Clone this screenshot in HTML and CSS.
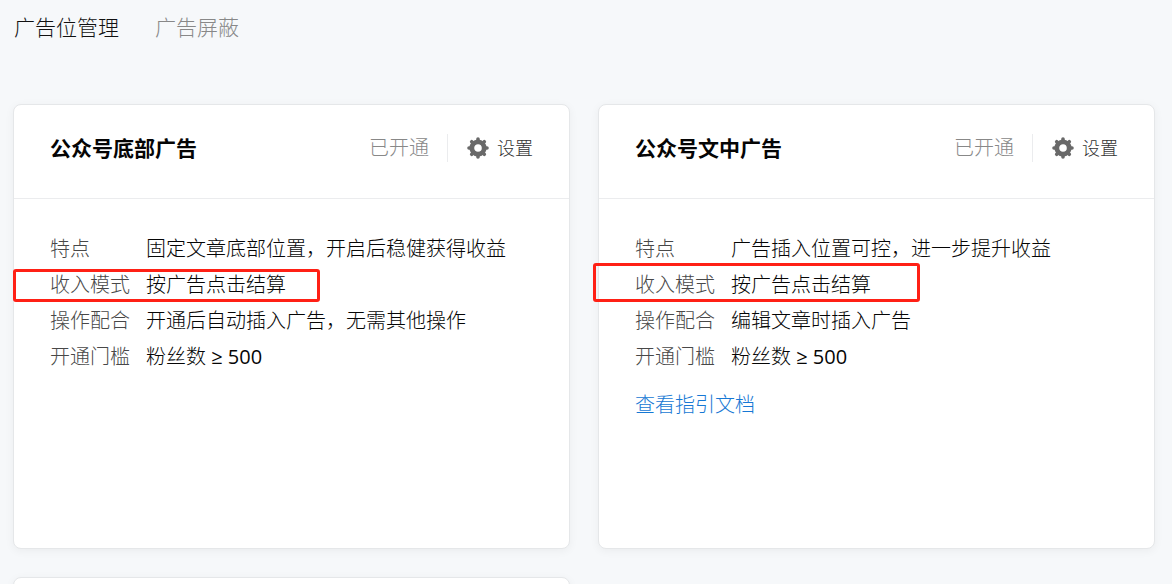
FILE: index.html
```html
<!DOCTYPE html>
<html lang="zh-CN">
<head>
<meta charset="utf-8">
<title>广告位管理</title>
<link rel="stylesheet" href="styles.css">
</head>
<body>
<nav class="tabs">
  <a class="tab tab-active" href="#slots">广告位管理</a>
  <a class="tab" href="#block">广告屏蔽</a>
</nav>
<main class="grid" id="slots">
  <section class="card">
    <header class="card-head">
      <h2 class="card-title">公众号底部广告</h2>
      <span class="status">已开通</span>
      <button class="settings" type="button">
        <svg class="gear" viewBox="0 0 22 22" aria-hidden="true"><circle cx="11" cy="11" r="6.200" fill="none" stroke="currentColor" stroke-width="4.800"/><path d="M11 2v2M11 18v2M2 11h2M18 11h2M4.700 4.700l1.200 1.200M16.100 16.100l1.200 1.200M4.700 17.300l1.200-1.200M16.100 5.900l1.200-1.200" stroke="currentColor" stroke-width="3.600" stroke-linecap="round"/></svg>
        <span>设置</span>
      </button>
    </header>
    <div class="card-body">
      <dl class="facts">
        <div class="fact"><dt>特点</dt><dd>固定文章底部位置，开启后稳健获得收益</dd></div>
        <div class="fact fact-marked mark-bottom"><dt>收入模式</dt><dd>按广告点击结算</dd></div>
        <div class="fact"><dt>操作配合</dt><dd>开通后自动插入广告，无需其他操作</dd></div>
        <div class="fact"><dt>开通门槛</dt><dd>粉丝数 <span class="amount">≥ 500</span></dd></div>
      </dl>
    </div>
  </section>
  <section class="card">
    <header class="card-head">
      <h2 class="card-title">公众号文中广告</h2>
      <span class="status">已开通</span>
      <button class="settings" type="button">
        <svg class="gear" viewBox="0 0 22 22" aria-hidden="true"><circle cx="11" cy="11" r="6.200" fill="none" stroke="currentColor" stroke-width="4.800"/><path d="M11 2v2M11 18v2M2 11h2M18 11h2M4.700 4.700l1.200 1.200M16.100 16.100l1.200 1.200M4.700 17.300l1.200-1.200M16.100 5.900l1.200-1.200" stroke="currentColor" stroke-width="3.600" stroke-linecap="round"/></svg>
        <span>设置</span>
      </button>
    </header>
    <div class="card-body">
      <dl class="facts">
        <div class="fact"><dt>特点</dt><dd>广告插入位置可控，进一步提升收益</dd></div>
        <div class="fact fact-marked mark-inline"><dt>收入模式</dt><dd>按广告点击结算</dd></div>
        <div class="fact"><dt>操作配合</dt><dd>编辑文章时插入广告</dd></div>
        <div class="fact"><dt>开通门槛</dt><dd>粉丝数 <span class="amount">≥ 500</span></dd></div>
      </dl>
      <a class="guide" href="#guide">查看指引文档</a>
    </div>
  </section>
  <section class="card"></section>
</main>
</body>
</html>
```
FILE: styles.css
```css
*, *::after { box-sizing: border-box; }
html { height: 100%; }
body {
  display: flex;
  flex-direction: column;
  height: 100%;
  margin: 0;
  overflow: hidden;
  background: #f6f8fa;
  color: #050505;
  font: 300 20px/36px "Open Sans", "Noto Sans CJK SC", sans-serif;
}
.tabs { display: flex; gap: 36px; padding: 9px 14px 0; }
.tab { color: #888; font-size: 21px; text-decoration: none; }
.tab-active { color: #111; }
.grid {
  flex: 1;
  min-height: 0;
  overflow: hidden;
  display: grid;
  grid-template-columns: 1fr 1fr;
  grid-auto-rows: minmax(445px, auto);
  gap: 28px;
  padding: 59px 17px 0 13px;
}
.card {
  background: #fff;
  border: 1px solid #e5e7e9;
  border-radius: 8px;
  box-shadow: 0 2px 10px rgba(0, 0, 0, 0.05);
}
.card-head {
  display: flex;
  align-items: center;
  height: 94px;
  padding: 0 36px 8px;
  border-bottom: 1px solid #ebecee;
}
.card-title { flex: 1; margin: 0; font-size: 21px; font-weight: 700; }
.status {
  padding-right: 18px;
  border-right: 1px solid #ebecee;
  color: #888;
  line-height: 28px;
}
.settings {
  display: flex;
  align-items: center;
  gap: 8px;
  padding: 0 0 0 19px;
  border: 0;
  background: none;
  color: #333;
  font: inherit;
  font-size: 18px;
}
.gear { width: 22px; height: 22px; color: #696969; }
.card-body { padding: 32px 36px; }
.facts { margin: 0; }
.fact { position: relative; display: flex; }
.fact dt { width: 96px; color: #484848; }
.fact dd { margin: 0; }
.amount { font-weight: 400; }
.fact-marked::after {
  content: "";
  position: absolute;
  border: 3px solid #ff2015;
  border-radius: 3px;
  pointer-events: none;
}
.mark-bottom::after { left: -37px; top: 2px; width: 307px; height: 33px; }
.mark-inline::after { left: -42px; top: -4px; width: 327px; height: 39px; }
.guide { display: inline-block; margin-top: 12px; color: #1678d4; text-decoration: none; }
```
